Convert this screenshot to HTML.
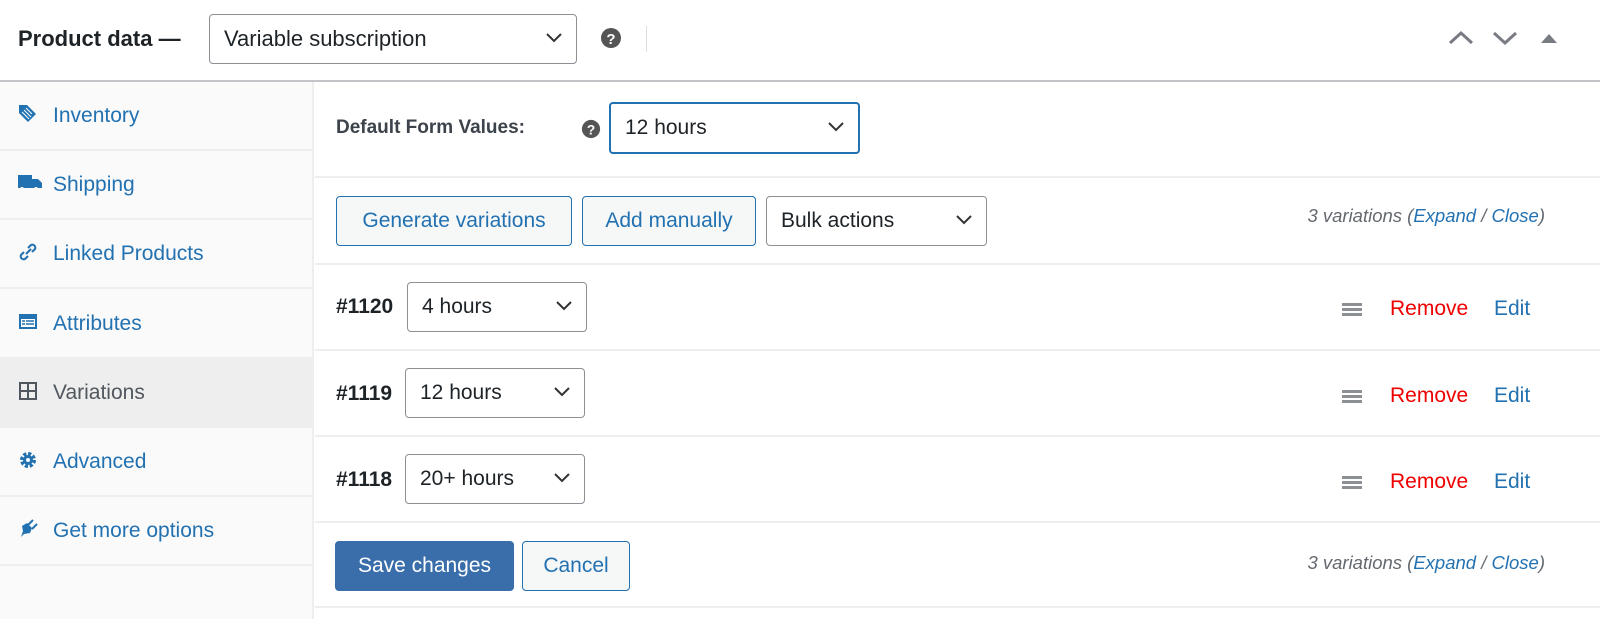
<!DOCTYPE html>
<html><head><style>
*{margin:0;padding:0;box-sizing:border-box}
body{width:1600px;height:619px;background:#fff;font-family:"Liberation Sans",sans-serif;position:relative;overflow:hidden;color:#1d2327}
.a{position:absolute}
.sel{position:absolute;border:1.5px solid #8c8f94;border-radius:4px;background:#fff;font-size:21px;color:#1d2327;padding-left:14px;display:flex;align-items:center}
.sel svg{position:absolute;right:14px;top:50%;margin-top:-6px}
.nav{position:absolute;left:0;width:313px;height:69px;border-bottom:2px solid #eee;font-size:21px;color:#2271b1;display:flex;align-items:center;padding-left:53px}
.nav .ic{position:absolute;left:18px;top:22px}
.hl{position:absolute;left:315px;right:0;height:2px;background:#eee}
.btn{position:absolute;height:50px;border:1.5px solid #2271b1;border-radius:4px;background:#f6f7f7;color:#2271b1;font-size:21px;display:flex;align-items:center;justify-content:center}
.rm{position:absolute;left:1390px;font-size:21px;color:#e00}
.ed{position:absolute;left:1494px;font-size:21px;color:#2271b1}
.hb{position:absolute;left:1342px;width:20px;height:2.5px;background:#8c8f94}
.num{position:absolute;left:336px;font-size:21px;font-weight:bold}
.vc{position:absolute;right:55px;font-size:18.5px;font-style:italic;color:#646970}
.vc b{font-weight:normal;color:#2271b1}
</style></head><body>
<div class="a" style="left:18px;top:26px;font-size:22px;font-weight:bold">Product data —</div>
<div class="sel" style="left:209px;top:14px;width:368px;height:50px;font-size:22px">Variable subscription<svg width="16" height="10" viewBox="0 0 16 10"><path d="M1 1l7 7 7-7" fill="none" stroke="#333" stroke-width="2"/></svg></div>
<svg class="a" style="left:600px;top:27px" width="22" height="22" viewBox="0 0 22 22"><circle cx="11" cy="11" r="10" fill="#555"/><text x="11" y="17" font-size="15" font-weight="bold" fill="#fff" text-anchor="middle" font-family="Liberation Sans">?</text></svg>
<div class="a" style="left:646px;top:26px;width:1px;height:26px;background:#ddd"></div>
<svg class="a" style="left:1448px;top:30px" width="26" height="16" viewBox="0 0 26 16"><path d="M2 13L13 3l11 10" fill="none" stroke="#787c82" stroke-width="3"/></svg>
<svg class="a" style="left:1492px;top:30px" width="26" height="16" viewBox="0 0 26 16"><path d="M2 3l11 10 11-10" fill="none" stroke="#787c82" stroke-width="3"/></svg>
<svg class="a" style="left:1540px;top:32px" width="18" height="12" viewBox="0 0 18 12"><path d="M1 11L9 2l8 9z" fill="#787c82"/></svg>
<div class="a" style="left:0;top:80px;width:1600px;height:2px;background:#c3c4c7"></div>

<div class="a" style="left:0;top:82px;width:314px;height:537px;background:#fafafa;border-right:2px solid #eee"></div>
<div class="nav" style="top:82px"><svg class="ic" width="20" height="20" viewBox="0 0 20 20"><path d="M9 1l9 9-8 8-9-9V1z" fill="#2271b1" transform="rotate(0)"/><path d="M4 8l7 7M6 6l7 7M8 4l6 6" stroke="#fff" stroke-width="1"/></svg>Inventory</div>
<div class="nav" style="top:151px"><svg class="ic" width="24" height="20" viewBox="0 0 24 20"><path d="M0 2h14v13H0zM14 6h6l4 4v5H14z" fill="#2271b1"/><circle cx="4" cy="16" r="2" fill="#fafafa"/><circle cx="18" cy="16" r="2" fill="#fafafa"/></svg>Shipping</div>
<div class="nav" style="top:220px"><svg class="ic" width="20" height="20" viewBox="0 0 20 20"><path d="M8 12l5-5M6 10l-3 3a3 3 0 004 4l3-3M14 10l3-3a3 3 0 00-4-4l-3 3" fill="none" stroke="#2271b1" stroke-width="2"/></svg>Linked Products</div>
<div class="nav" style="top:290px"><svg class="ic" width="20" height="20" viewBox="0 0 20 20"><rect x="1" y="2" width="18" height="15" fill="#2271b1"/><rect x="3" y="7" width="14" height="8" fill="#fff"/><path d="M4 9h3M4 12h3M8 9h8M8 12h8" stroke="#2271b1" stroke-width="1.5"/></svg>Attributes</div>
<div class="nav" style="top:359px;background:#eee;color:#50575e"><svg class="ic" width="20" height="20" viewBox="0 0 20 20"><path d="M2 2h16v16H2zM10 2v16M2 10h16" fill="none" stroke="#50575e" stroke-width="2"/></svg>Variations</div>
<div class="nav" style="top:428px"><svg class="ic" width="20" height="20" viewBox="0 0 20 20"><circle cx="10" cy="10" r="6" fill="none" stroke="#2271b1" stroke-width="4" stroke-dasharray="3 1.7"/><circle cx="10" cy="10" r="5" fill="#2271b1"/><circle cx="10" cy="10" r="2" fill="#fafafa"/></svg>Advanced</div>
<div class="nav" style="top:497px"><svg class="ic" width="20" height="20" viewBox="0 0 20 20"><path d="M3 18l3-3 6-1 2-5-5-5-5 3 1 5z" fill="#2271b1"/><path d="M10 6l5-5M14 10l5-5" stroke="#2271b1" stroke-width="2"/></svg>Get more options</div>

<div class="a" style="left:336px;top:117px;font-size:19px;font-weight:bold;color:#3c434a">Default Form Values:</div>
<svg class="a" style="left:581px;top:119px" width="20" height="20" viewBox="0 0 22 22"><circle cx="11" cy="11" r="10" fill="#555"/><text x="11" y="17" font-size="15" font-weight="bold" fill="#fff" text-anchor="middle" font-family="Liberation Sans">?</text></svg>
<div class="sel" style="left:609px;top:102px;width:251px;height:52px;border:2px solid #2271b1;color:#1d2327">12 hours<svg width="16" height="10" viewBox="0 0 16 10"><path d="M1 1l7 7 7-7" fill="none" stroke="#333" stroke-width="2"/></svg></div>
<div class="hl" style="top:176px"></div>

<div class="btn" style="left:336px;top:196px;width:236px">Generate variations</div>
<div class="btn" style="left:582px;top:196px;width:174px">Add manually</div>
<div class="sel" style="left:766px;top:196px;width:221px;height:50px">Bulk actions<svg width="16" height="10" viewBox="0 0 16 10"><path d="M1 1l7 7 7-7" fill="none" stroke="#333" stroke-width="2"/></svg></div>
<div class="vc" style="top:205px">3 variations (<b>Expand</b> / <b>Close</b>)</div>
<div class="hl" style="top:263px"></div>

<div class="num" style="top:295px">#1120</div>
<div class="sel" style="left:407px;top:282px;width:180px;height:50px">4 hours<svg width="16" height="10" viewBox="0 0 16 10"><path d="M1 1l7 7 7-7" fill="none" stroke="#333" stroke-width="2"/></svg></div>
<div class="hb" style="top:303px"></div><div class="hb" style="top:308px"></div><div class="hb" style="top:313px"></div>
<div class="rm" style="top:297px">Remove</div><div class="ed" style="top:297px">Edit</div>
<div class="hl" style="top:349px"></div>

<div class="num" style="top:382px">#1119</div>
<div class="sel" style="left:405px;top:368px;width:180px;height:50px">12 hours<svg width="16" height="10" viewBox="0 0 16 10"><path d="M1 1l7 7 7-7" fill="none" stroke="#333" stroke-width="2"/></svg></div>
<div class="hb" style="top:390px"></div><div class="hb" style="top:395px"></div><div class="hb" style="top:400px"></div>
<div class="rm" style="top:384px">Remove</div><div class="ed" style="top:384px">Edit</div>
<div class="hl" style="top:435px"></div>

<div class="num" style="top:468px">#1118</div>
<div class="sel" style="left:405px;top:454px;width:180px;height:50px">20+ hours<svg width="16" height="10" viewBox="0 0 16 10"><path d="M1 1l7 7 7-7" fill="none" stroke="#333" stroke-width="2"/></svg></div>
<div class="hb" style="top:476px"></div><div class="hb" style="top:481px"></div><div class="hb" style="top:486px"></div>
<div class="rm" style="top:470px">Remove</div><div class="ed" style="top:470px">Edit</div>
<div class="hl" style="top:521px"></div>

<div class="btn" style="left:335px;top:541px;width:179px;background:#3a6eaa;border-color:#3a6eaa;color:#fff">Save changes</div>
<div class="btn" style="left:522px;top:541px;width:108px">Cancel</div>
<div class="vc" style="top:552px">3 variations (<b>Expand</b> / <b>Close</b>)</div>
<div class="hl" style="top:606px"></div>
</body></html>
